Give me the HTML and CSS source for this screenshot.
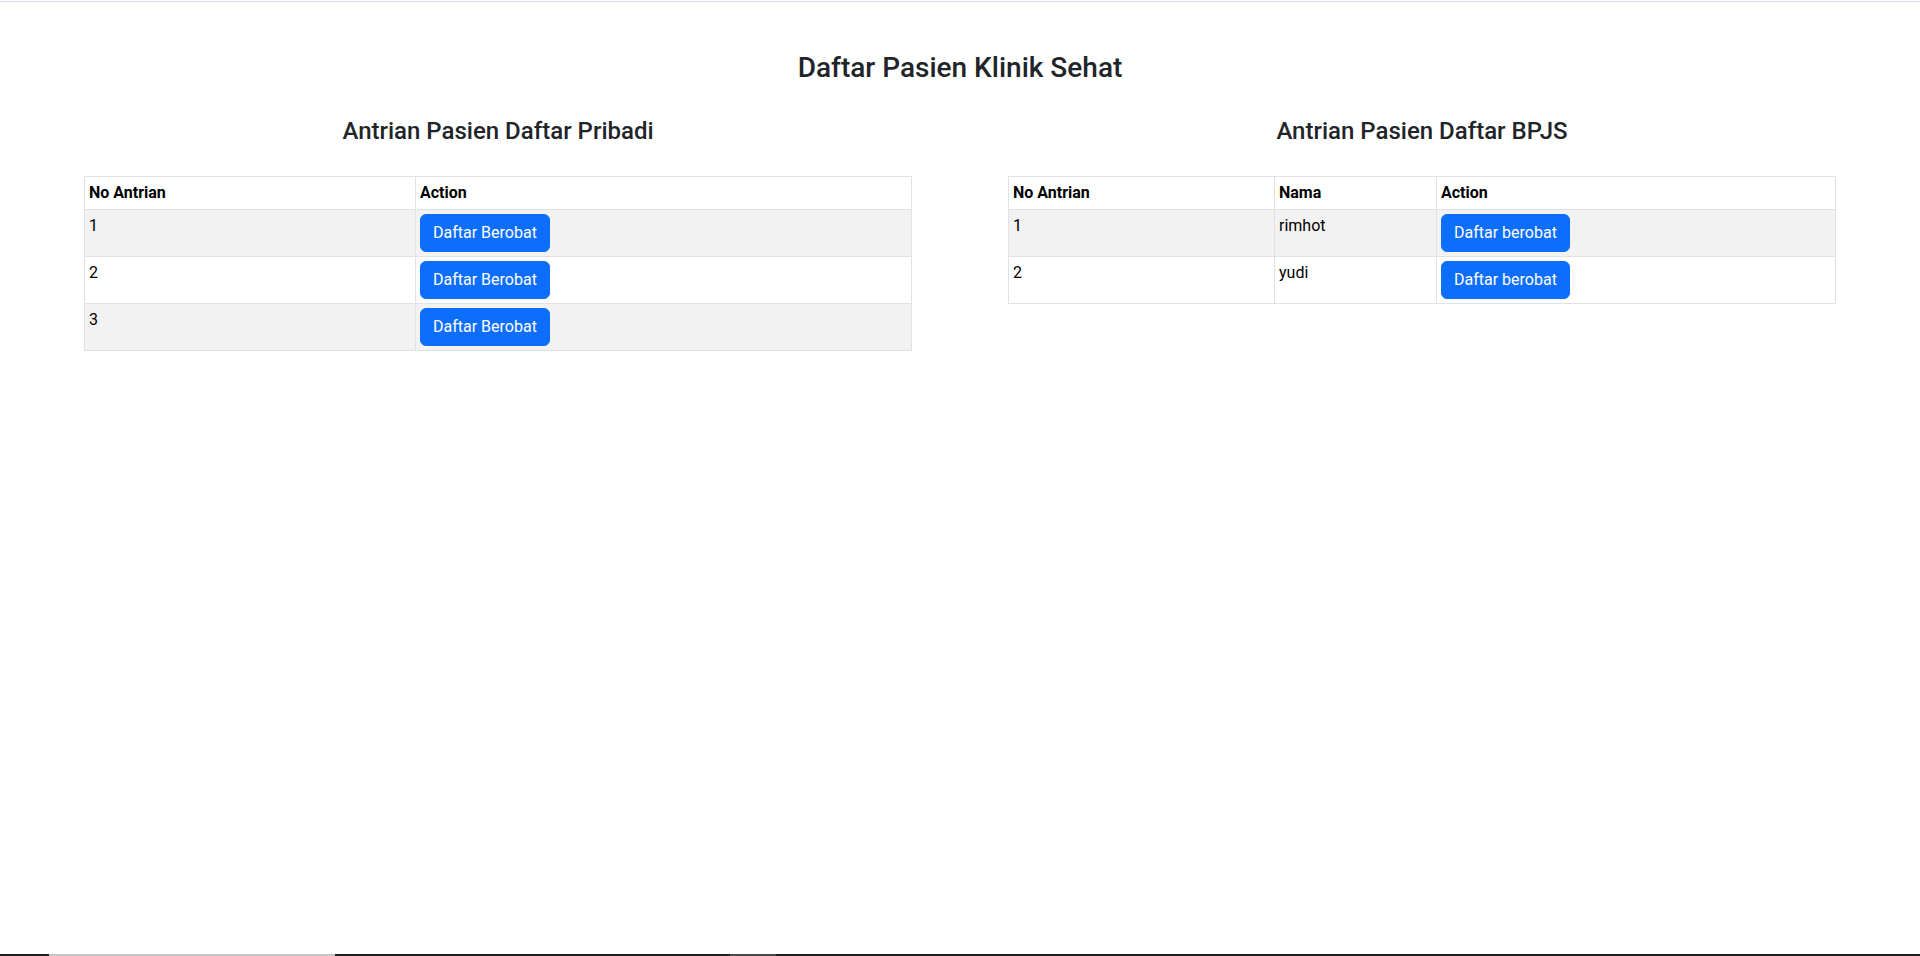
FILE: index.html
```html
<!DOCTYPE html>
<html lang="id">
<head>
<meta charset="utf-8">
<title>Daftar Pasien Klinik Sehat</title>
<link rel="stylesheet" href="styles.css">
</head>
<body>
<div class="page">
  <div class="topline"></div>
  <main class="main">
    <h3 class="title">Daftar Pasien Klinik Sehat</h3>
    <div class="columns">
      <section class="col">
        <h4 class="subtitle">Antrian Pasien Daftar Pribadi</h4>
        <table class="tbl">
          <thead>
            <tr><th class="w-no-left">No Antrian</th><th>Action</th></tr>
          </thead>
          <tbody>
            <tr><td>1</td><td><button class="btn">Daftar Berobat</button></td></tr>
            <tr><td>2</td><td><button class="btn">Daftar Berobat</button></td></tr>
            <tr><td>3</td><td><button class="btn">Daftar Berobat</button></td></tr>
          </tbody>
        </table>
      </section>
      <section class="col">
        <h4 class="subtitle">Antrian Pasien Daftar BPJS</h4>
        <table class="tbl">
          <thead>
            <tr><th class="w-no-right">No Antrian</th><th class="w-nama">Nama</th><th>Action</th></tr>
          </thead>
          <tbody>
            <tr><td>1</td><td>rimhot</td><td><button class="btn">Daftar berobat</button></td></tr>
            <tr><td>2</td><td>yudi</td><td><button class="btn">Daftar berobat</button></td></tr>
          </tbody>
        </table>
      </section>
    </div>
  </main>
  <div class="taskbar">
    <span class="seg seg-dark seg-a"></span>
    <span class="seg seg-light seg-b"></span>
    <span class="seg seg-dark seg-c"></span>
    <span class="seg seg-mid seg-d"></span>
    <span class="seg seg-dark seg-e"></span>
  </div>
</div>
</body>
</html>
```
FILE: styles.css
```css
* { box-sizing: border-box; }

html, body {
  margin: 0;
  padding: 0;
  background: #fff;
}

body {
  font-family: Roboto, "Liberation Sans", sans-serif;
  font-size: 16px;
  line-height: 1.5;
  color: #212529;
}

.page {
  min-height: 100vh;
  display: flex;
  flex-direction: column;
}

.topline {
  height: 1px;
  margin-top: 1px;
  background: #d9d6e6;
}

.main {
  flex: 1;
  padding: 0 84px;
}

.title {
  margin: 49px 0 0;
  font-size: 28px;
  font-weight: 500;
  line-height: 1.2;
  text-align: center;
}

.columns {
  display: flex;
  gap: 96px;
  margin-top: 32px;
}

.col {
  flex: 1 1 0;
  min-width: 0;
}

.subtitle {
  margin: 0 0 31px;
  font-size: 24px;
  font-weight: 500;
  line-height: 1.2;
  text-align: center;
}

.tbl {
  width: 100%;
  border-collapse: collapse;
  table-layout: fixed;
  color: #000;
}

.tbl th,
.tbl td {
  border: 1px solid #dee2e6;
  padding: 4px;
  text-align: left;
  vertical-align: top;
  line-height: 24px;
}

.tbl th {
  font-weight: 700;
}

.tbl tbody tr:nth-child(odd) td {
  background: #f2f2f2;
}

.w-no-left { width: 331px; }
.w-no-right { width: 266px; }
.w-nama { width: 162px; }

.btn {
  display: inline-block;
  font-family: inherit;
  font-size: 16px;
  line-height: 24px;
  padding: 6px 12px;
  color: #fff;
  background: #0d6efd;
  border: 1px solid #0d6efd;
  border-radius: 6px;
  cursor: pointer;
  vertical-align: top;
}

.taskbar {
  display: flex;
  height: 2px;
}

.seg { display: block; height: 100%; }
.seg-dark { background: #1f1f1f; }
.seg-light { background: #c6c6c6; }
.seg-mid { background: #4a4a4a; }
.seg-a { width: 49px; }
.seg-b { width: 286px; }
.seg-c { width: 395px; }
.seg-d { width: 46px; }
.seg-e { flex: 1; }
```
